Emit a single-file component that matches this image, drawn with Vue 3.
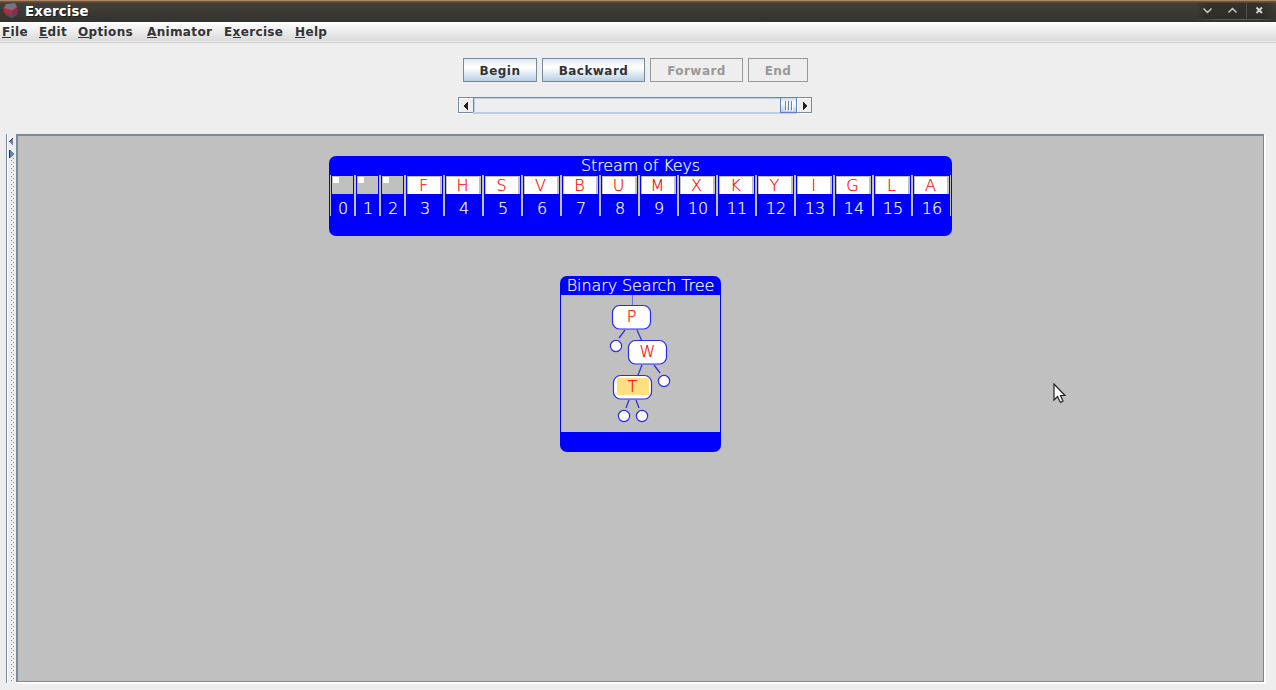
<script setup>
const menus = [
  { a: '', k: 'F', b: 'ile', w: 37 },
  { a: '', k: 'E', b: 'dit', w: 39 },
  { a: '', k: 'O', b: 'ptions', w: 69 },
  { a: '', k: 'A', b: 'nimator', w: 77 },
  { a: 'E', k: 'x', b: 'ercise', w: 71 },
  { a: '', k: 'H', b: 'elp', w: 40 },
]
const keys = ['', '', '', ...'FHSVBUMXKYIGLA']
const nodes = [
  { x: 612.5, y: 305.5, t: 'P', tx: 631.5, ty: 322 },
  { x: 628.5, y: 340.5, t: 'W', tx: 647.5, ty: 357 },
  { x: 613.5, y: 375.5, t: 'T', tx: 632.5, ty: 392, hot: true },
]
const leaves = [[616, 346], [664, 381], [624, 416], [642, 416]]
const edges = [
  [625, 330, 619, 338], [637, 330, 641.5, 340], [642, 365, 638, 375],
  [654, 365, 660, 373], [629, 400, 626, 408], [636, 400, 639, 408],
]
</script>

<template>
  <div class="window">
    <header class="titlebar">
      <svg class="logo" width="16" height="16" viewBox="0 0 16 16">
        <path d="M2 7 9 9 14 6 14 12 9 15.500 3 12Z" fill="#4d4d66" />
        <path d="M0.500 5 9 8 9 12 6 11 4 12 1 9.500Z" fill="#a82f40" />
        <path d="M9 7.500 13.500 4 15.500 8 12.500 10 12 13 10 11Z" fill="#8d2c3c" />
        <path d="M3 1 12 0 14 4 9 7.500 1 5Z" fill="#73738a" />
        <path d="M0.500 5 9 7.500 14 4" fill="none" stroke="#cf3346" />
      </svg>
      <span class="title">Exercise</span>
      <svg class="controls" width="96" height="22" viewBox="0 0 96 22">
        <defs>
          <linearGradient id="rim"><stop offset="0" stop-color="#5b5851" stop-opacity="0" /><stop offset=".3" stop-color="#5b5851" /><stop offset=".8" stop-color="#5b5851" /><stop offset="1" stop-color="#5b5851" stop-opacity="0" /></linearGradient>
          <linearGradient id="well"><stop offset="0" stop-color="#262520" stop-opacity="0" /><stop offset=".15" stop-color="#262520" stop-opacity=".5" /><stop offset=".85" stop-color="#262520" stop-opacity=".5" /><stop offset="1" stop-color="#262520" stop-opacity="0" /></linearGradient>
        </defs>
        <rect x="15" y="3" width="80" height="16" fill="url(#well)" />
        <rect x="15" y="19" width="80" height="1" fill="url(#rim)" />
        <rect x="66" y="2" width="1" height="16" fill="#514f49" />
        <path d="M23.500 8.500 27.500 12.500 31.500 8.500M48.500 12.500 52.500 8.500 56.500 12.500" fill="none" stroke="#c9c7c1" stroke-width="1.500" />
        <path d="M76.500 7.500 82 13M82 7.500 76.500 13" stroke="#d5d3ce" stroke-width="2" />
      </svg>
    </header>
    <nav class="menubar">
      <span v-for="m in menus" :key="m.k + m.b" class="menu" :style="{ width: m.w + 'px' }">{{ m.a }}<u>{{ m.k }}</u>{{ m.b }}</span>
    </nav>
    <section class="toolbar">
      <div class="buttons">
        <button class="btn begin">Begin</button>
        <button class="btn backward">Backward</button>
        <button class="btn forward" disabled>Forward</button>
        <button class="btn end" disabled>End</button>
      </div>
      <div class="scrollbar">
        <div class="arrow left"><svg width="4" height="8" viewBox="0 0 4 8" shape-rendering="crispEdges"><path d="M4 0V8L0 5V3Z" fill="#222" /></svg></div>
        <div class="track"><div class="thumb"><i></i><i></i><i></i></div></div>
        <div class="arrow right"><svg width="4" height="8" viewBox="0 0 4 8" shape-rendering="crispEdges"><path d="M0 0V8L4 5V3Z" fill="#222" /></svg></div>
      </div>
    </section>
    <main class="split">
      <div class="divider">
        <svg width="8" height="20" viewBox="0 0 8 20" shape-rendering="crispEdges">
          <path d="M6 0V8L2 4Z" fill="#6382bf" /><path d="M6 0 2 4" stroke="#333" />
          <path d="M3 12V20L7 16Z" fill="#6382bf" /><path d="M2.500 12V20" stroke="#333" />
        </svg>
        <div class="dots"></div>
      </div>
      <div class="canvas">
        <div class="stream">
          <div class="stream-title">Stream of Keys</div>
          <div class="cells">
            <div v-for="(k, i) in keys" :key="i" class="col" :class="{ empty: !k }">
              <div class="cell"><div class="fill">{{ k }}</div></div>
              <div class="index">{{ i }}</div>
            </div>
          </div>
        </div>
        <svg class="tree" width="161" height="176" viewBox="560 276 161 176">
          <rect x="560" y="276" width="161" height="176" rx="7" fill="#00f" />
          <rect x="561" y="295" width="159" height="137" fill="#c0c0c0" />
          <text class="tree-title" x="640.5" y="291" textLength="147.5">Binary Search Tree</text>
          <path d="M632.500 295V305" stroke="#7070e0" />
          <line v-for="(e, i) in edges" :key="i" :x1="e[0]" :y1="e[1]" :x2="e[2]" :y2="e[3]" stroke="#3030e0" stroke-width="1.300" />
          <g v-for="n in nodes" :key="n.t">
            <rect :x="n.x" :y="n.y" width="38" height="23.500" rx="7" fill="#fff" stroke="#2a2aef" stroke-width="1.200" />
            <rect v-if="n.hot" :x="n.x + 3.500" :y="n.y + 2.500" width="32" height="17" fill="#ffe080" />
            <text class="node-text" :x="n.tx" :y="n.ty">{{ n.t }}</text>
          </g>
          <circle v-for="(l, i) in leaves" :key="'l' + i" :cx="l[0]" :cy="l[1]" r="5.600" fill="#fff" stroke="#2a2aef" stroke-width="1.200" />
        </svg>
        <svg class="pointer" width="14" height="21" viewBox="0 0 14 21"><path d="M1 1V17L4.500 13.500 7.500 19.500 10 18 7.500 12.500H12Z" fill="#fff" stroke="#222" stroke-width="1.200" /></svg>
      </div>
    </main>
  </div>
</template>

<style>
html, body { margin: 0; overflow: hidden; background: #eee; }
</style>
<style scoped>
.window { width: 1276px; height: 690px; display: flex; flex-direction: column; background: #eee; color: #333; font: bold 12px "DejaVu Sans", sans-serif; box-sizing: border-box; }
.titlebar { height: 22px; flex: none; display: flex; align-items: center; background: linear-gradient(#a8856a 0 1px, #725335 1px 2px, #4d3c2a 3px, #403f39 4px, #34322d 22px); color: #fff; }
.logo { margin: 0 6px 1px 3px; flex: none; }
.title { font-size: 13.333px; line-height: 20px; margin-top: 2px; letter-spacing: .1px; text-shadow: 1px 1px #1d1c19; }
.controls { margin-left: auto; }
.menubar { height: 21px; flex: none; box-sizing: border-box; display: flex; padding-left: 2px; background: linear-gradient(#fff, #dadada 19px, #eee 19px 20px, #ccc 20px); }
.menu { line-height: 20px; white-space: nowrap; flex: none; letter-spacing: .35px; }
.menu u { text-decoration: none; background: linear-gradient(#333, #333) 0 12px / 100% 1px no-repeat; }
.toolbar { height: 92px; flex: none; padding-top: 15px; box-sizing: border-box; }
.buttons { display: flex; gap: 5px; padding-left: 463px; }
.btn { height: 24px; padding: 2px 0 0; box-sizing: border-box; border: 1px solid #7a8a99; font: inherit; color: #333; background: linear-gradient(#dde8f3, #fff 34%, #fff 40%, #b8cfe5); line-height: 20px; letter-spacing: .45px; }
.btn:disabled { color: #999; border-color: #999; background: #eee; }
.begin { width: 74px; }
.backward { width: 103px; }
.forward { width: 93px; }
.end { width: 60px; }
.scrollbar { display: flex; width: 354px; height: 16px; box-sizing: border-box; margin: 15px 0 0 458px; border: 1px solid #7a8a99; box-shadow: 0 1px #fff; }
.arrow { width: 14px; display: flex; align-items: center; justify-content: center; border: solid #fff; border-width: 1px 0 0 1px; box-sizing: border-box; padding-top: 1px; }
.arrow.left { padding-right: 1px; }
.arrow.right { padding-left: 1px; }
.track { flex: 1; display: flex; justify-content: flex-end; border-left: 1px solid #7a8a99; box-shadow: inset 1px 1px #b8cfe5, 0 2px #b8cfe5; }
.thumb { width: 17px; box-sizing: border-box; margin: -1px 0; border: 1px solid #6382bf; background: linear-gradient(#c8daed, #fff 35%, #b8cfe5); display: flex; gap: 1px; align-items: center; justify-content: center; }
.thumb i { width: 1px; height: 9px; margin-right: 1px; background: #6382bf; box-shadow: 1px 1px #fff; }
.thumb i:last-child { margin-right: 0; }
.split { display: flex; height: 549px; flex: none; padding-left: 6px; }
.divider { width: 10px; box-sizing: border-box; margin-top: -1px; height: 549px; border-left: 1px solid #7a8a99; box-shadow: inset 1px 0 #fff; display: flex; flex-direction: column; padding-top: 4px; }
.divider svg { flex: none; }
.dots { flex: 1; margin: 0 0 2px 4px; width: 4px; background: radial-gradient(circle at .5px .5px, #7a8a99 .7px, transparent .8px) 0 2px / 4px 4px, radial-gradient(circle at .5px .5px, #7a8a99 .7px, transparent .8px) 2px 0 / 4px 4px; }
.canvas { position: relative; width: 1248px; height: 548px; margin-top: -1px; box-sizing: border-box; border: solid #7a8a99; border-width: 2px 1px 1px 2px; box-shadow: 1px 1px #fff, 2px 2px #fff; background: #c0c0c0; display: flex; flex-direction: column; padding: 20px 0 0 311px; }
.stream { width: 623px; height: 80px; box-sizing: border-box; border-radius: 7px; background: #00f; padding: 0 1px; color: #fff; font-weight: 200; font-size: 16px; flex: none; -webkit-text-stroke: .2px currentColor; }
.stream-title { height: 19px; line-height: 19px; text-align: center; letter-spacing: -.13px; }
.cells { display: flex; height: 41px; border: solid #c0c0c0; border-width: 0 1px; }
.col { box-sizing: border-box; width: 39px; padding: 1px 1px 0; border-right: 2px solid #c0c0c0; flex: none; }
.col:last-child { width: 37px; border: 0; }
.col.empty { width: 25px; }
.cell { height: 18px; box-sizing: border-box; padding: 1px 2px 0 1px; background: #c0c0c0; }
.fill { height: 17px; line-height: 17px; text-align: center; background: #fff; color: #f00; text-indent: -1px; }
.empty .fill { width: 6px; height: 6px; }
.index { text-align: center; line-height: 19px; height: 23px; padding-top: 5px; box-sizing: border-box; margin: 0 -4px 0 -3px; white-space: nowrap; }
.tree { display: block; flex: none; margin: 40px 0 0 231px; }
.tree-title, .node-text { font: 200 16px "DejaVu Sans", sans-serif; text-anchor: middle; fill: #fff; stroke: #fff; stroke-width: .2px; }
.node-text { fill: #f00; stroke: #f00; }
.pointer { position: absolute; left: 1035px; top: 247px; }
</style>
